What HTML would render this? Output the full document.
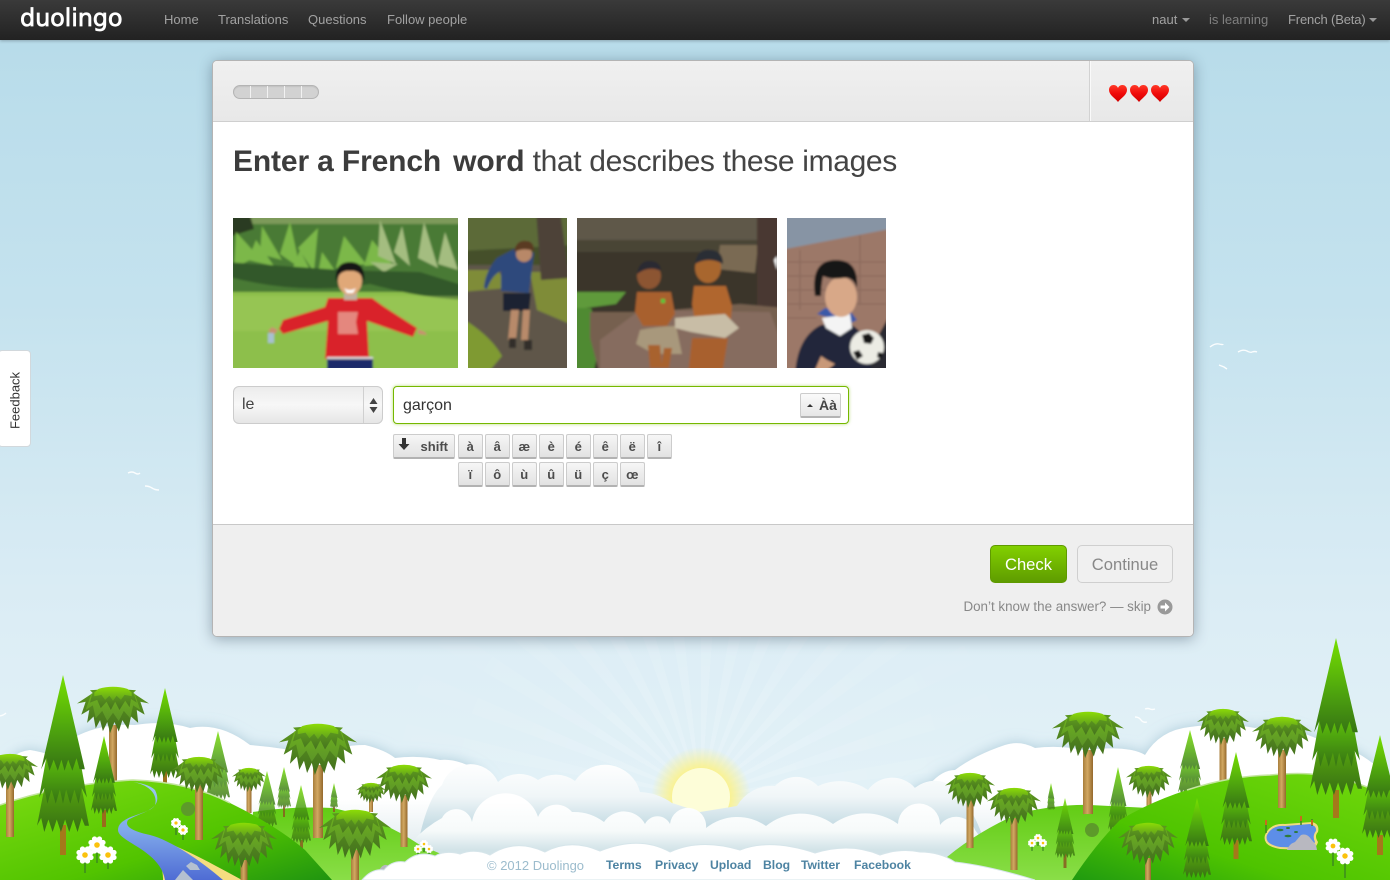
<!DOCTYPE html>
<html lang="en"><head><meta charset="utf-8"><title>Duolingo</title>
<style>
*{box-sizing:border-box}
html,body{margin:0;padding:0;width:1390px;height:880px;overflow:hidden;background:#dcedf5}
body{font-family:"Liberation Sans",sans-serif}
#wrap{position:relative;width:1390px;height:880px;overflow:hidden;background:linear-gradient(#b8dcea 40px,#c4e2ee 300px,#dcedf5 620px,#e2f1f7 780px)}
#rays{position:absolute;left:341px;top:437px;width:720px;height:443px;background:repeating-conic-gradient(from 0deg at 50% 360px,rgba(255,255,255,.17) 0 4deg,rgba(255,255,255,0) 4deg 10deg);-webkit-mask-image:radial-gradient(circle 360px at 50% 360px,#000 10%,transparent 100%);mask-image:radial-gradient(circle 360px at 50% 360px,#000 10%,transparent 100%)}
#scene{position:absolute;left:0;top:0}
#nav{position:absolute;left:0;top:0;width:1390px;height:40px;background:linear-gradient(#3a3a3a,#222);box-shadow:0 1px 3px rgba(0,0,0,.25)}
#nav span{position:absolute;top:12px;font-size:13px;line-height:15px;color:#a2a2a2;white-space:nowrap}
#logo{position:absolute;left:20px;top:3px;font:400 24px/30px "DejaVu Sans",sans-serif;color:#fff;letter-spacing:-.15px;-webkit-text-stroke:.7px #fff;white-space:nowrap}
.caret{position:absolute;top:18px;width:0;height:0;border:4px solid transparent;border-top-color:#999;border-bottom:0}
#card{position:absolute;left:212px;top:60px;width:982px;height:577px;background:#fff;border:1px solid #b4b4b4;border-radius:5px;box-shadow:0 2px 14px rgba(40,60,80,.4);overflow:hidden}
#chead{position:absolute;left:0;top:0;width:980px;height:61px;background:linear-gradient(#f0f0f0,#e8e8e8);border-bottom:1px solid #cfcfcf}
#vdiv{position:absolute;left:876px;top:0;width:2px;height:60px;background:#d2d2d2;border-right:1px solid #fafafa}
#prog{position:absolute;left:20px;top:24px;width:86px;height:14px;border-radius:7px;background:#d2d2d2;border:1px solid #b4b4b4;box-shadow:inset 0 1px 1px rgba(0,0,0,.08)}
#prog i{position:absolute;top:0;width:1px;height:12px;background:#f2f2f2}
h1{position:absolute;left:20px;top:83px;margin:0;font-size:30px;line-height:36px;font-weight:400;color:#444;letter-spacing:-.34px;white-space:nowrap}
h1 b{color:#3c3c3c;letter-spacing:-.14px}
h1 b+b{letter-spacing:-.05px;margin-left:4px}
#sel{position:absolute;left:20px;top:325px;width:150px;height:38px;border:1px solid #ccc;border-radius:6px;background:linear-gradient(#ececec,#f7f7f7 50%,#e6e6e6);font-size:16px;line-height:36px;padding-left:8px;color:#444}
#sel i{position:absolute;right:18px;top:0;width:1px;height:36px;background:#d0d0d0}
#inp{position:absolute;left:180px;top:325px;width:456px;height:38px;border:1px solid #76b800;border-radius:4px;background:#fff;box-shadow:0 0 3px rgba(122,190,0,.55);font-size:16px;line-height:38px;padding-left:9px;color:#333}
#aa{position:absolute;left:587px;top:332px;width:41px;height:25px;border:1px solid #ccc;border-bottom:2px solid #b4b4b4;border-radius:2px;background:linear-gradient(#fafafa,#e6e6e6);font-size:14px;font-weight:700;line-height:22px;color:#444;padding-left:18px}
#aa i{position:absolute;left:6px;top:10px;width:0;height:0;border:3.5px solid transparent;border-bottom-color:#333;border-top:0}
.k{position:absolute;width:24.5px;height:25px;border:1px solid #ccc;border-bottom:2px solid #b2b2b2;border-radius:2px;background:linear-gradient(#f6f6f6,#e2e2e2);font-size:13px;font-weight:700;line-height:23px;text-align:center;color:#4c4c4c}
#cfoot{position:absolute;left:0;top:463px;width:980px;height:112px;background:#efefef;border-top:1px solid #c8c8c8}
#check{position:absolute;left:777px;top:20px;width:77px;height:38px;border:1px solid #5f9a00;border-radius:5px;background:linear-gradient(#82d000,#5f9c00);color:#fff;font-size:16.6px;line-height:37px;text-align:center}
#cont{position:absolute;left:864px;top:20px;width:96px;height:38px;border:1px solid #cfcfcf;border-radius:5px;background:#f0f0f0;color:#888;font-size:16.6px;line-height:37px;text-align:center}
#skip{position:absolute;right:42px;top:74px;font-size:13.4px;line-height:16px;color:#888;white-space:nowrap}
#fb{position:absolute;left:-2px;top:350px;width:33px;height:97px;background:#fff;border:1px solid #d2d8dc;border-radius:4px}
#fb span{position:absolute;left:-15px;top:42px;width:62px;text-align:center;transform:rotate(-90deg);font-size:13px;line-height:15px;color:#333;white-space:nowrap}
#foot span{position:absolute;top:858px;font-size:12.2px;line-height:15px;font-weight:700;color:#4d83a2;white-space:nowrap}
</style></head>
<body>
<div id="wrap">
<div id="rays"></div>
<svg id="scene" width="1390" height="880" viewBox="0 0 1390 880" xmlns="http://www.w3.org/2000/svg">
<defs>
<linearGradient id="tier" x1="0" y1="0" x2="0" y2="1"><stop offset="0" stop-color="#77e000"/><stop offset=".55" stop-color="#4fa60e"/><stop offset="1" stop-color="#367314"/></linearGradient>
<linearGradient id="tier2" x1="0" y1="0" x2="0" y2="1"><stop offset="0" stop-color="#5fb40c"/><stop offset="1" stop-color="#376f14"/></linearGradient>
<linearGradient id="cr1" x1="0" y1="0" x2="0" y2="1"><stop offset="0" stop-color="#5d9a1e"/><stop offset="1" stop-color="#436f1e"/></linearGradient>
<linearGradient id="cr2" x1="0" y1="0" x2="0" y2="1"><stop offset="0" stop-color="#6cb01e"/><stop offset="1" stop-color="#5c9428"/></linearGradient>
<linearGradient id="cr3" x1="0" y1="0" x2="0" y2="1"><stop offset="0" stop-color="#8cdc06"/><stop offset="1" stop-color="#5f9e1e"/></linearGradient>
<linearGradient id="tr" x1="0" y1="0" x2="1" y2="0"><stop offset="0" stop-color="#a87e3c"/><stop offset=".45" stop-color="#d2a862"/><stop offset="1" stop-color="#94682c"/></linearGradient>
<linearGradient id="hillL" x1="0" y1="0" x2="1" y2="1"><stop offset="0" stop-color="#7ddc12"/><stop offset=".6" stop-color="#52c400"/><stop offset="1" stop-color="#1f9410"/></linearGradient>
<linearGradient id="hillR" x1="0" y1="1" x2="1" y2="0"><stop offset="0" stop-color="#1f9a10"/><stop offset=".35" stop-color="#4ec400"/><stop offset="1" stop-color="#72d80c"/></linearGradient>
<linearGradient id="hillB" x1="0" y1="0" x2="0" y2="1"><stop offset="0" stop-color="#62cc14"/><stop offset="1" stop-color="#8ade48"/></linearGradient>
<linearGradient id="cloudBig" gradientUnits="userSpaceOnUse" x1="0" y1="725" x2="0" y2="850"><stop offset="0" stop-color="#fff"/><stop offset=".6" stop-color="#fff"/><stop offset="1" stop-color="#dfeaee"/></linearGradient>
<linearGradient id="cA" gradientUnits="userSpaceOnUse" x1="0" y1="762" x2="0" y2="825"><stop offset="0" stop-color="#fff"/><stop offset=".55" stop-color="#f0f6f8"/><stop offset="1" stop-color="#c6dce4"/></linearGradient>
<linearGradient id="cB" gradientUnits="userSpaceOnUse" x1="0" y1="802" x2="0" y2="850"><stop offset="0" stop-color="#fff"/><stop offset=".6" stop-color="#f6fafa"/><stop offset="1" stop-color="#d2e3e8"/></linearGradient>
<linearGradient id="river" x1="0" y1="0" x2="0" y2="1"><stop offset="0" stop-color="#9ccaf2"/><stop offset=".5" stop-color="#7fa8ea"/><stop offset="1" stop-color="#4f6cd4"/></linearGradient>
<linearGradient id="hrt" x1="0" y1="0" x2="0" y2="1"><stop offset="0" stop-color="#ff3a28"/><stop offset=".5" stop-color="#f00a0a"/><stop offset="1" stop-color="#d00000"/></linearGradient>
<radialGradient id="glow"><stop offset=".55" stop-color="#fff27a" stop-opacity=".85"/><stop offset="1" stop-color="#fff27a" stop-opacity="0"/></radialGradient>
<filter id="soft" x="-10%" y="-20%" width="120%" height="140%"><feDropShadow dx="0" dy="-1" stdDeviation="6" flood-color="#8fb6c8" flood-opacity=".55"/></filter>
<filter id="bl" x="-5%" y="-5%" width="110%" height="110%"><feGaussianBlur stdDeviation="1"/></filter>
<g id="pine">
<path d="M-30 62L-50 96-42 91-36 100-28 92-20 100-12 92-4 100 4 92 12 100 20 92 28 100 36 91 42 96 50 96 30 62Z" fill="url(#tier2)"/>
<path d="M-24 38L-46 78-36 72-30 82-22 73-14 82-6 73 0 82 6 73 14 82 22 73 30 82 36 72 46 78 24 38Z" fill="url(#tier)"/>
<path d="M0 0L-42 60-32 53-26 61-18 54-10 61-3 54 3 61 10 54 18 61 26 53 32 60 42 60Z" fill="url(#tier)"/>
</g>
<g id="palm">
<path d="M-22 6Q0-5 22 6L32 7 28 13 50 36 38 32 44 60 33 50 35 78 25 64 21 92 13 72 8 97 2 76-4 100-8 76-14 96-18 72-24 90-27 64-36 78-33 50-44 60-38 32-50 36-28 13-32 7Z" fill="url(#cr1)"/>
<path d="M-30 14L-38 50-28 40-24 68-15 52-8 74 0 56 8 74 15 52 24 68 28 40 38 50 30 14Z" fill="url(#cr2)"/>
<path d="M-28 10L-32 34-22 28-17 46-9 32-3 50 3 32 9 50 17 30 23 44 25 26 33 34 28 10Z" fill="url(#cr1)" opacity=".9"/>
<path d="M-20 4Q0-5 20 4L26 12 26 20 16 17 11 28 5 19 0 30-5 19-11 28-16 17-26 20-26 12Z" fill="url(#cr3)"/>
</g>
<g id="daisy"><path d="M0-10A3.6 3.6 0 0 1 7-7 3.6 3.6 0 0 1 10 0 3.6 3.6 0 0 1 7 7 3.6 3.6 0 0 1 0 10 3.6 3.6 0 0 1-7 7 3.6 3.6 0 0 1-10 0 3.6 3.6 0 0 1-7-7 3.6 3.6 0 0 1 0-10Z" fill="#fff"/><circle r="4" fill="#fbc20c"/></g>
<path id="heart" d="M0 17C-3 13-9 10-9 5-9 1.500-6.500 0-4.500 0-2.500 0-.8 1 0 3 .8 1 2.500 0 4.500 0 6.500 0 9 1.500 9 5 9 10 3 13 0 17Z"/>
<clipPath id="p1"><rect x="233" y="218" width="225" height="150"/></clipPath>
<clipPath id="p2"><rect x="468" y="218" width="99" height="150"/></clipPath>
<clipPath id="p3"><rect x="577" y="218" width="200" height="150"/></clipPath>
<clipPath id="p4"><rect x="787" y="218" width="99" height="150"/></clipPath>
</defs>

<!-- birds -->
<g fill="none" stroke="#fff" stroke-width="1.4" opacity=".9">
<path d="M1210 347q5-4 9-3t4 0 M1238 352q5-3 9-1t5 1 q3-1 5 0 M1219 365l5 2 3 2 M128 473q4-2 7 0t5 0 M145 486q4 0 7 2t7 2 M1145 709q3-1 5 0t5 0 M1135 717q4 0 6 3t6 2 M0 716q4-1 6-3"/>
</g>

<!-- big back clouds -->
<g fill="url(#cloudBig)" filter="url(#soft)">
<path d="M0 880V775Q10 752 30 750 42 752 50 755 85 722 135 725 165 720 190 728 220 722 250 745 285 748 315 755 340 745 365 745 385 750 395 758 420 755 440 760 458 758 480 772 498 790 500 810V880Z"/>
<path d="M905 880V800Q912 784 930 784 942 770 955 770 975 755 1005 745 1020 740 1035 748 1060 745 1082 750 1130 745 1145 755 1160 730 1190 727 1225 722 1255 728 1280 722 1320 740 1350 745 1375 765L1390 790V880Z"/>
</g>

<!-- sun -->
<circle cx="701" cy="797" r="50" fill="url(#glow)"/>
<circle cx="701" cy="797" r="29" fill="#fdfdd8"/>

<!-- center clouds -->
<path fill="url(#cA)" d="M415 860Q425 800 442 785A30 30 0 0 1 498 782A32 32 0 0 1 538 780A32 32 0 0 1 575 781A36 36 0 0 1 640 792A60 60 0 0 1 672 803L700 812 737 806A40 40 0 0 1 775 786A30 30 0 0 1 818 786A50 50 0 0 1 868 790A30 30 0 0 1 915 788A30 30 0 0 1 960 795Q978 815 990 860Z"/>
<path fill="url(#cB)" d="M385 880Q410 835 442 818A16 16 0 0 1 472 822A34 34 0 0 1 538 817A20 20 0 0 1 572 812A50 50 0 0 1 604 822A24 24 0 0 1 645 824A14 14 0 0 1 670 824A16 16 0 0 1 706 828A50 50 0 0 1 766 826A55 55 0 0 1 833 824A55 55 0 0 1 898 824A20 20 0 0 1 940 825A20 20 0 0 1 975 830Q990 850 1010 880Z"/>

<!-- back hills -->
<path d="M253 812Q290 806 333 808 380 818 420 845L460 862V880H250Z" fill="url(#hillB)"/>
<path d="M947 857Q980 830 1020 813 1060 804 1090 805L1150 808 1200 880H947Z" fill="url(#hillB)"/>

<!-- back trees left -->
<g opacity=".82">
<use href="#pine" transform="translate(218,731) scale(.24,.69)"/>
<use href="#pine" transform="translate(267,771) scale(.2,.56)"/>
<rect x="283" y="805" width="2" height="12" fill="#8a5a20"/><use href="#pine" transform="translate(284,767) scale(.14,.41)"/>
<rect x="300" y="840" width="3" height="10" fill="#8a5a20"/><use href="#pine" transform="translate(301,785) scale(.2,.58)"/>
<rect x="333" y="805" width="2" height="7" fill="#8a5a20"/><use href="#pine" transform="translate(334,783) scale(.08,.25)"/>
</g>
<rect x="109" y="725" width="8" height="65" fill="url(#tr)"/><use href="#palm" transform="translate(113,687) scale(.72,.46)"/>
<rect x="246.500" y="785" width="5" height="28" fill="url(#tr)"/><use href="#palm" transform="translate(249,768) scale(.34,.24)"/>
<rect x="313" y="765" width="10" height="73" fill="url(#tr)"/><use href="#palm" transform="translate(318,724) scale(.78,.51)"/>
<rect x="400.500" y="795" width="7" height="52" fill="url(#tr)"/><use href="#palm" transform="translate(404,765) scale(.56,.38)"/>
<rect x="369" y="798" width="4" height="14" fill="url(#tr)"/><use href="#palm" transform="translate(371,783) scale(.3,.2)"/>
<rect x="163" y="770" width="4" height="24" fill="#9a701c"/><use href="#pine" transform="translate(165,688) scale(.3,.9)"/>

<!-- left hill -->
<path d="M0 805Q60 784 133 780 190 782 230 803 277 826 305 850L332 880H0Z" fill="url(#hillL)"/>
<path d="M0 805Q60 784 133 780 190 782 230 803" fill="none" stroke="#c4e4a0" stroke-width="1.500"/>

<!-- river -->
<path d="M122 834C135 842 164 850 163 880H242C205 860 175 843 150 838 132 832 122 830 122 834Z" fill="#f5dd80"/>
<path d="M133 782C150 785 158 795 155 805 150 815 118 815 118 830 118 842 160 850 165 880H223C200 860 170 840 150 835 128 830 125 825 128 820 140 812 165 810 155 790 150 785 140 783 133 782Z" fill="url(#river)"/>
<path d="M175 880l8-10 10 10ZM186 866l5-4 6 3 3 5-10 0Z" fill="#b4c0d0"/>

<!-- left trees -->
<rect x="6" y="780" width="8" height="57" fill="url(#tr)"/><use href="#palm" transform="translate(10,754) scale(.56,.36)"/>
<rect x="60" y="825" width="6" height="30" fill="#a5781a"/><use href="#pine" transform="translate(63,675) scale(.52,1.57)"/>
<rect x="102" y="810" width="4" height="17" fill="#9a6a1c"/><use href="#pine" transform="translate(104,736) scale(.26,.78)"/>
<circle cx="188" cy="809" r="7" fill="#5d9a2a"/>
<rect x="195" y="785" width="8" height="55" fill="url(#tr)"/><use href="#palm" transform="translate(199,757) scale(.54,.36)"/>
<rect x="240.500" y="860" width="7" height="20" fill="url(#tr)"/><use href="#palm" transform="translate(244,823) scale(.66,.45)"/>
<rect x="351" y="850" width="8" height="30" fill="url(#tr)"/><use href="#palm" transform="translate(355,810) scale(.72,.5)"/>
<path d="M378 872q4-8 9-7l8 6 4 3-22 1Z" fill="#b8b8c0"/>

<!-- flowers left -->
<g stroke="#3d8a20" stroke-width="1.500"><path d="M85 855v18M97 845v18M108 855v14M176 823v12M183 830v10M418 849v8M424 844v8M429 849v8"/></g>
<use href="#daisy" transform="translate(85,855) scale(.7)"/><use href="#daisy" transform="translate(97,845) scale(.7)"/><use href="#daisy" transform="translate(108,855) scale(.7)"/>
<use href="#daisy" transform="translate(176,823) scale(.4)"/><use href="#daisy" transform="translate(183,830) scale(.4)"/>
<use href="#daisy" transform="translate(418,849) scale(.32)"/><use href="#daisy" transform="translate(424,844) scale(.32)"/><use href="#daisy" transform="translate(429,849) scale(.32)"/>

<!-- right back trees -->
<rect x="966.500" y="800" width="7" height="48" fill="url(#tr)"/><use href="#palm" transform="translate(970,773) scale(.5,.35)"/>
<rect x="1010.500" y="818" width="7" height="52" fill="url(#tr)"/><use href="#palm" transform="translate(1014,788) scale(.54,.37)"/>
<rect x="1083" y="750" width="10" height="64" fill="url(#tr)"/><use href="#palm" transform="translate(1088,712) scale(.72,.46)"/>
<rect x="1146.500" y="790" width="5" height="22" fill="url(#tr)"/><use href="#palm" transform="translate(1149,766) scale(.46,.32)"/>
<rect x="1219.500" y="738" width="7" height="45" fill="url(#tr)"/><use href="#palm" transform="translate(1223,709) scale(.52,.36)"/>
<g opacity=".85">
<use href="#pine" transform="translate(1051,783) scale(.08,.27)"/>
<rect x="1063.500" y="850" width="3" height="18" fill="#8a5a20"/><use href="#pine" transform="translate(1065,798) scale(.2,.6)"/>
<use href="#pine" transform="translate(1118,767) scale(.2,.65)"/>
<use href="#pine" transform="translate(1190,730) scale(.24,.65)"/>
</g>
<circle cx="1092" cy="830" r="7" fill="#5d9a2a"/>
<g stroke="#3d8a20" stroke-width="1.200"><path d="M1032 843v8M1038 838v8M1043 843v8"/></g>
<use href="#daisy" transform="translate(1032,843) scale(.32)"/><use href="#daisy" transform="translate(1038,838) scale(.32)"/><use href="#daisy" transform="translate(1043,843) scale(.32)"/>

<!-- right hill -->
<path d="M1072 880Q1095 845 1120 820 1150 802 1187 790 1230 776 1270 775 1300 772 1320 775 1345 778 1367 787L1390 800V880Z" fill="url(#hillR)"/>
<path d="M1187 790Q1230 776 1270 775 1300 772 1320 775 1345 778 1367 787" fill="none" stroke="#c4e4a0" stroke-width="1.500"/>

<!-- right front trees -->
<rect x="1278" y="750" width="8" height="58" fill="url(#tr)"/><use href="#palm" transform="translate(1282,717) scale(.6,.41)"/>
<rect x="1233.500" y="840" width="5" height="19" fill="#a5781a"/><use href="#pine" transform="translate(1236,752) scale(.32,.93)"/>
<use href="#pine" transform="translate(1197,798) scale(.28,.8)"/>
<rect x="1145" y="858" width="6" height="22" fill="url(#tr)"/><use href="#palm" transform="translate(1148,823) scale(.6,.42)"/>
<rect x="1333" y="790" width="6" height="28" fill="#a5781a"/><use href="#pine" transform="translate(1336,638) scale(.52,1.57)"/>
<rect x="1377" y="835" width="6" height="20" fill="#a5781a"/><use href="#pine" transform="translate(1380,735) scale(.36,1.03)"/>

<!-- pond -->
<path d="M1265 835Q1270 823 1285 824L1312 822Q1320 824 1318 832 1314 836 1318 842 1316 850 1305 850L1280 849Q1262 846 1265 835Z" fill="#f0dc80"/>
<path d="M1267 835Q1272 825 1285 826L1310 824Q1317 826 1316 831 1312 836 1315 842 1312 848 1305 848L1280 847Q1264 844 1267 835Z" fill="#5d8ee8"/>
<path d="M1287 850q2-6 8-8l6-7q6-2 10 4l5 6 1 5Z" fill="#b8b8c0"/>
<g fill="#2e7a3a"><ellipse cx="1280" cy="830" rx="3.500" ry="1.300"/><ellipse cx="1288" cy="828" rx="2" ry="1"/><ellipse cx="1288" cy="836" rx="3.500" ry="1.300"/><ellipse cx="1296" cy="832" rx="2" ry="1"/></g>
<g stroke="#3d8a20" stroke-width="1.500"><path d="M1266 833v-8M1301 825v-7M1312 826v-7M1333 848v18M1345 860v18"/></g>
<g fill="#c86a1e"><rect x="1265" y="820" width="2" height="5"/><rect x="1300" y="816" width="2" height="5"/><rect x="1311" y="820" width="2" height="5"/></g>
<use href="#daisy" transform="translate(1333,846) scale(.6)"/><use href="#daisy" transform="translate(1345,856) scale(.68)"/>

<!-- foreground cloud -->
<g fill="#fff" stroke="#d6e5ea" stroke-width="1">
<path d="M362 880Q372 868 384 870 392 860 405 862 418 850 435 856 445 850 460 854 475 848 490 855 515 838 545 852 570 838 600 851 640 835 670 852 700 838 740 850 770 838 815 853 850 842 880 855 900 848 920 852 940 852 955 862 990 866 1035 880Z"/>
</g>
</svg>

<div id="nav">
<div id="logo">duolingo</div>
<span style="left:164px">Home</span><span style="left:218px">Translations</span><span style="left:308px">Questions</span><span style="left:387px">Follow people</span>
<span style="left:1152px">naut</span><i class="caret" style="left:1182px"></i>
<span style="left:1209px;color:#808080">is learning</span>
<span style="left:1288px;letter-spacing:-.15px">French (Beta)</span><i class="caret" style="left:1369px"></i>
</div>

<div id="card">
<div id="chead">
<div id="prog"><i style="left:16px"></i><i style="left:33px"></i><i style="left:50px"></i><i style="left:67px"></i></div>
<div id="vdiv"></div>
<svg style="position:absolute;left:895px;top:21px" width="64" height="22" viewBox="895 21 64 22" fill="url(#hrt)"><use href="#heart" transform="translate(905,24)"/><use href="#heart" transform="translate(926,24)"/><use href="#heart" transform="translate(947,24)"/></svg>
</div>
<h1><b>Enter a French</b> <b>word</b> that describes these images</h1>
<div id="sel">le<i></i><svg style="position:absolute;right:4px;top:11px" width="9" height="15" viewBox="0 0 9 15" fill="#444"><path d="M4.500 0L8.500 6H.5ZM4.500 15L.5 9H8.500Z"/></svg></div>
<div id="inp">garçon</div>
<div id="aa"><i></i>Àà</div>
<div class="k" style="left:180px;top:373px;width:62px;text-align:right;padding-right:6px">shift<svg style="position:absolute;left:4px;top:3px" width="12" height="13" viewBox="0 0 12 13" fill="#333"><path d="M4 0H8V6H11.500L6 12 .5 6H4Z"/></svg></div>
<div class="k" style="left:245px;top:373px">à</div><div class="k" style="left:272px;top:373px">â</div><div class="k" style="left:299px;top:373px">æ</div><div class="k" style="left:326px;top:373px">è</div><div class="k" style="left:353px;top:373px">é</div><div class="k" style="left:380px;top:373px">ê</div><div class="k" style="left:407px;top:373px">ë</div><div class="k" style="left:434px;top:373px">î</div>
<div class="k" style="left:245px;top:401px">ï</div><div class="k" style="left:272px;top:401px">ô</div><div class="k" style="left:299px;top:401px">ù</div><div class="k" style="left:326px;top:401px">û</div><div class="k" style="left:353px;top:401px">ü</div><div class="k" style="left:380px;top:401px">ç</div><div class="k" style="left:407px;top:401px">œ</div>
<div id="cfoot">
<div id="check">Check</div><div id="cont">Continue</div>
<div id="skip">Don’t know the answer? — skip</div>
<svg style="position:absolute;left:944px;top:74px" width="16" height="16" viewBox="0 0 16 16"><circle cx="8" cy="8" r="7.500" fill="#999"/><path d="M3.500 6.500H8V3.500L12.500 8 8 12.500V9.500H3.500Z" fill="#fff"/></svg>
</div>
</div>

<!-- photographs -->
<svg style="position:absolute;left:0;top:0;pointer-events:none" width="1390" height="880" viewBox="0 0 1390 880">
<g clip-path="url(#p1)"><g filter="url(#bl)">
<rect x="225" y="210" width="240" height="165" fill="#8dbf4c"/>
<rect x="225" y="210" width="240" height="82" fill="#4a7a34"/>
<rect x="225" y="210" width="240" height="14" fill="#7d9a5a"/>
<path d="M228 215h22l4 14-26 8Z" fill="#2a3a20"/>
<g fill="#7cb84a"><path d="M236 232l22 24-24 12ZM256 240l18 26-26-6ZM262 226l20 34-22-6ZM290 222l10 46-20-14ZM318 228l-4 44-16-24ZM344 236l22 28-30 4ZM322 252l14 20-18 2ZM372 240l20 24-28 2ZM300 250l12 24-20-4Z"/></g>
<g fill="#a4bd80"><path d="M380 220l16 44-18-8ZM402 226l8 40-16-14ZM424 222l14 46-20-10ZM445 232l13 38-20-6ZM370 262l28 2-14 8Z"/></g>
<path d="M225 276Q300 296 370 284 420 298 465 300V286L420 272 340 270 225 262Z" fill="#33582a"/>
<path d="M225 296h240v35H225Z" fill="#a2cc5c" opacity=".45"/>
<path d="M372 298l-44 0-3 9-42 13-4 9 4 5 45-13-3 38h44l-2-38 46 16 4-9-34-22Z" fill="#d9202a"/>
<rect x="327" y="358" width="46" height="12" fill="#1c2a6a"/>
<rect x="327" y="357" width="46" height="2" fill="#ddd"/>
<path d="M338 312h20l-2 10 2 12-20 0 0-12Z" fill="#e4877e"/>
<path d="M278 330l-6-3-4 4 6 4ZM418 329l7 3 2 3-9-1Z" fill="#c89070"/>
<rect x="268" y="333" width="6" height="10" fill="#a8c0d0"/>
<rect x="344" y="292" width="13" height="8" fill="#c0b0a0"/>
<ellipse cx="350" cy="281" rx="12" ry="14" fill="#e0a878"/>
<path d="M336 282q-2-20 14-20 16 0 14 20-3-12-14-11-11-1-14 11Z" fill="#181818"/>
<path d="M344 288q6 4 12 0l-3 5h-6Z" fill="#fff"/>
</g></g>
<g clip-path="url(#p2)"><g filter="url(#bl)">
<rect x="460" y="210" width="115" height="165" fill="#44502c"/>
<path d="M460 210h115v35l-115 6Z" fill="#5c6a38"/>
<rect x="460" y="265" width="115" height="110" fill="#5f574a"/>
<path d="M460 270h38l10 18-48 4ZM530 272h40v52l-33-14Z" fill="#7f8c38"/>
<path d="M460 322h8q24 16 34 34l-16 19h-26Z" fill="#7f9a30"/>
<path d="M536 210h24l9 68-28 2Z" fill="#4e4238"/>
<path d="M497 258q-12 14-13 30l3 1q5-14 14-18l0 20 28 2 5-40-16-6Z" fill="#2f4a7c"/>
<path d="M503 293h28l-2 18h-26Z" fill="#1c2430"/>
<path d="M511 310h8l-3 30h-8ZM523 310h7l-2 30h-7Z" fill="#b88a6a"/>
<path d="M509 338h7v10h-7ZM524 340h8v10h-8Z" fill="#332e2c"/>
<circle cx="524" cy="254" r="8" fill="#b88868"/><path d="M514 252q2-12 12-11 8 0 8 10-10-4-20 1Z" fill="#5a3a24"/>
</g></g>
<g clip-path="url(#p3)"><g filter="url(#bl)">
<rect x="570" y="210" width="215" height="165" fill="#3a362c"/>
<rect x="570" y="210" width="215" height="30" fill="#5e5848"/>
<rect x="570" y="240" width="215" height="12" fill="#4a4436"/>
<path d="M720 245h38l-3 28-38-4Z" fill="#7a6a52"/>
<rect x="757" y="210" width="28" height="110" fill="#4a3830"/>
<path d="M570 292h56l-10 12-46 6Z" fill="#5f9a3a"/>
<path d="M570 308h21l10 30-8 37h-23Z" fill="#4f8a30"/>
<path d="M590 312h60l90-8 45 4v67H600l-10-37Z" fill="#76604f"/>
<path d="M600 340l40-30 130 2 15 40-8 23H600Z" fill="#866c5e"/>
<ellipse cx="649" cy="276" rx="12" ry="13" fill="#8c5430"/>
<path d="M637 274q2-14 14-13 10 1 10 10-12-6-24 3Z" fill="#2a2a30"/>
<path d="M637 292h34l4 22-8 12h-24l-8-14Z" fill="#a8602f"/>
<path d="M640 330q20-4 36-4l6 28-28 0-18-10Z" fill="#a8987c"/>
<path d="M648 345h12l2 23h-12ZM664 348h8l-3 20h-8Z" fill="#a8622f"/>
<ellipse cx="708" cy="268" rx="13" ry="15" fill="#a8662e"/>
<path d="M695 264q2-16 16-14 12 1 12 14-14-8-28 0Z" fill="#2a2e34"/>
<path d="M694 286h32l6 20-2 22h-34l-4-24Z" fill="#b0662f"/>
<path d="M675 318q24-2 50-4l14 14-14 10-34-6-16-4Z" fill="#c8bda6"/>
<path d="M692 338h36l-6 37h-34Z" fill="#a8602f"/>
<rect x="661" y="299" width="4" height="4" fill="#4fc83a"/>
<path d="M774 260l3-4v14Z" fill="#fff"/>
</g></g>
<g clip-path="url(#p4)"><g filter="url(#bl)">
<rect x="780" y="210" width="115" height="165" fill="#9c7868"/>
<path d="M780 210h115v18l-115 22Z" fill="#8794a4"/>
<g stroke="#86665a" stroke-width="1"><path d="M787 262h99M787 276h99M787 290h99M787 304h99M787 318h30M800 250v60M860 235v70"/></g>
<path d="M895 305v70h-38Z" fill="#2a2c30"/>
<path d="M795 375q2-38 26-50l26-2q18 6 22 32l3 20Z" fill="#20283a"/>
<path d="M817 314l8-6 26 4 6 8-8 4Z" fill="#3a5aa8"/>
<path d="M822 318l28-4 2 14-12 8-14-8Z" fill="#f4f4f4"/>
<ellipse cx="841" cy="297" rx="16" ry="20" fill="#d8a888"/>
<path d="M815 296q-5-36 21-36 23 0 21 28-4-12-14-10-12 2-20-2-2 10-2 20Z" fill="#141418"/>
<circle cx="867" cy="347" r="17" fill="#ecece4"/>
<path d="M862 335l7-2 5 5-3 6-7-1ZM853 352l6-2 4 6-6 4ZM878 352l5 1-2 6-4-2Z" fill="#141418"/>
<path d="M815 370l6-14 6 4 8 4-8 6Z" fill="#c89878"/>
</g></g>
</svg>

<div id="fb"><span>Feedback</span></div>

<div id="foot">
<span style="left:487px;font-weight:400;font-size:13px;color:#9cbccd">© 2012 Duolingo</span>
<span style="left:606px">Terms</span><span style="left:655px">Privacy</span><span style="left:710px">Upload</span><span style="left:763px">Blog</span><span style="left:801px">Twitter</span><span style="left:854px">Facebook</span>
</div>
</div>
</body></html>
